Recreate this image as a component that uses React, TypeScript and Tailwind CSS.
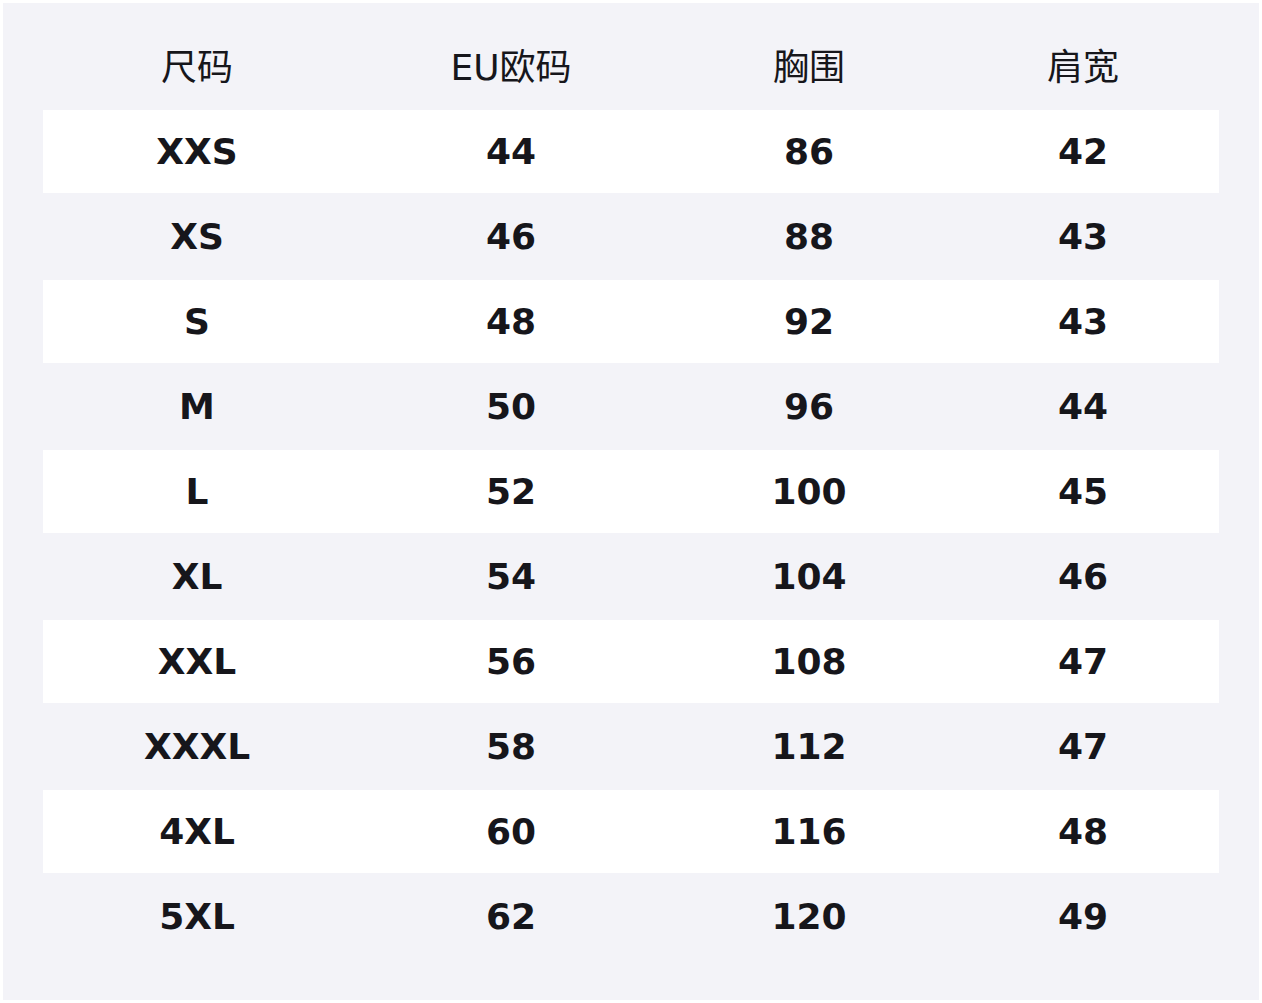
const rows = [
  ['XXS', '44', '86', '42'],
  ['XS', '46', '88', '43'],
  ['S', '48', '92', '43'],
  ['M', '50', '96', '44'],
  ['L', '52', '100', '45'],
  ['XL', '54', '104', '46'],
  ['XXL', '56', '108', '47'],
  ['XXXL', '58', '112', '47'],
  ['4XL', '60', '116', '48'],
  ['5XL', '62', '120', '49'],
];

const headers = ['尺码', 'EU欧码', '胸围', '肩宽'];

// fixed column widths, measured from the chart
const cols = 'grid grid-cols-[308px_320px_276px_272px]';

export default function App() {
  return (
    <div className="bg-white p-[3px] w-[1262px] h-[1003px]">
      <div
        className="w-[1256px] h-[997px] bg-[#f3f3f8] px-[40px] pt-[40px] text-[#16161b]"
        style={{ fontFamily: '"DejaVu Sans", "Noto Sans CJK SC", sans-serif' }}
      >
        <div className="flex flex-col gap-[2px]">
          <div className={`${cols} h-[65px] pt-[4px] text-[36px] leading-[42px]`}>
            {headers.map((h) => (
              <div key={h} className="text-center">
                {h}
              </div>
            ))}
          </div>

          {rows.map((r, i) => (
            <div
              key={r[0]}
              className={`${cols} h-[83px] items-center text-[36px] font-bold leading-[42px] ${
                i % 2 === 0 ? 'bg-white' : ''
              }`}
            >
              {r.map((v, j) => (
                <div key={j} className="text-center">
                  {v}
                </div>
              ))}
            </div>
          ))}
        </div>
      </div>
    </div>
  );
}
